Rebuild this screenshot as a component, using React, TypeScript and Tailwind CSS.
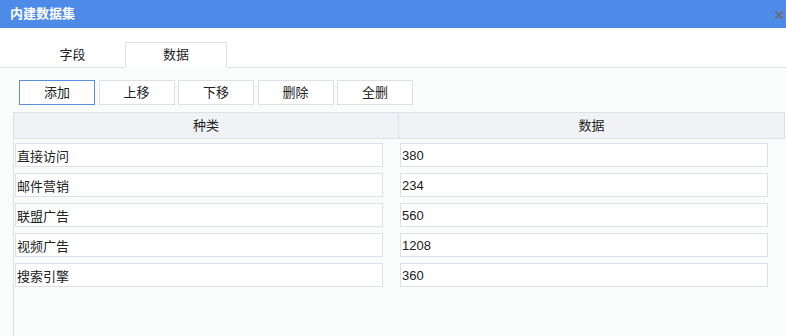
const rows = [
  { name: "直接访问", value: "380" },
  { name: "邮件营销", value: "234" },
  { name: "联盟广告", value: "560" },
  { name: "视频广告", value: "1208" },
  { name: "搜索引擎", value: "360" },
];

const buttons = ["添加", "上移", "下移", "删除", "全删"];

export default function App() {
  return (
    <div
      className="w-[786px] h-[336px] overflow-hidden bg-[#fafcfc] text-[13px] text-[#222]"
      style={{ fontFamily: '"Liberation Sans", "Noto Sans CJK SC", sans-serif' }}
    >
      {/* 标题栏 */}
      <div className="h-[28px] bg-[#4e8ae8] flex items-center justify-between pl-[10px] pr-[2px]">
        <span className="text-white font-bold text-[13px]">内建数据集</span>
        <svg width="10" height="10" viewBox="0 0 10 10" className="mt-[1px]">
          <path d="M1.5 1.5L8.5 8.5M8.5 1.5L1.5 8.5" stroke="#6b6f78" strokeWidth="2.2" />
        </svg>
      </div>

      {/* 标签页 */}
      <div className="h-[40px] bg-white border-b border-[#dfe3e6] flex items-end pl-[20px]">
        <div className="w-[105px] h-[25px] flex items-center justify-center mb-[-1px] border-b border-[#dfe3e6]">
          字段
        </div>
        <div className="w-[102px] h-[26px] flex items-center justify-center mb-[-1px] bg-white border border-b-white border-[#dfe3e6]">
          数据
        </div>
      </div>

      {/* 按钮 */}
      <div className="flex gap-[3.5px] pl-[19px] pt-[12px]">
        {buttons.map((b, i) => (
          <button
            key={b}
            className={`w-[76px] h-[25px] bg-white border text-[13px] ${
              i === 0 ? "border-[#5b8fd9]" : "border-[#dde1e6]"
            }`}
          >
            {b}
          </button>
        ))}
      </div>

      {/* 表格 */}
      <div className="ml-[13px] mr-[1px] mt-[7px] border-l border-[#dde1e6] h-[240px]">
        <div className="flex h-[27px] bg-[#f0f2f6] border border-l-0 border-[#dde1e6]">
          <div className="w-[385px] flex items-center justify-center border-r border-[#dde1e6]">种类</div>
          <div className="flex-1 flex items-center justify-center">数据</div>
        </div>
        <div className="flex flex-col gap-[6px] pt-[4px]">
          {rows.map((r) => (
            <div key={r.name} className="flex h-[24px]">
              <div className="w-[386px] pl-[1px]">
                <input
                  readOnly
                  value={r.name}
                  className="w-[368px] h-full bg-white border border-[#dde1e6] px-[1px] outline-none"
                />
              </div>
              <div className="pl-[0px]">
                <input
                  readOnly
                  value={r.value}
                  className="w-[368px] h-full bg-white border border-[#dde1e6] px-[1px] outline-none"
                />
              </div>
            </div>
          ))}
        </div>
      </div>
    </div>
  );
}
